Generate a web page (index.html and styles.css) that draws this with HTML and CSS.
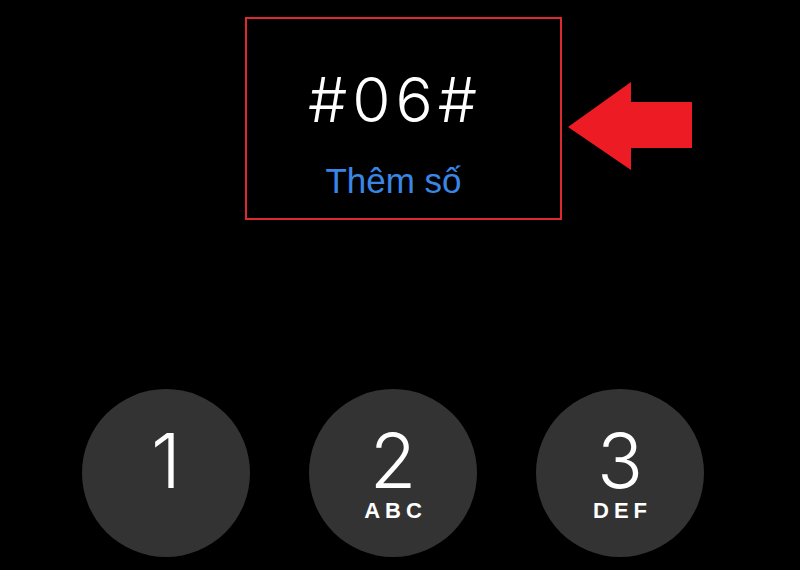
FILE: index.html
```html
<!DOCTYPE html>
<html lang="vi">
<head>
    <meta charset="UTF-8">
    <meta name="viewport" content="width=device-width, initial-scale=1.0">
    <title>Bàn phím</title>
    <link rel="stylesheet" href="styles.css">
</head>
<body>
    <div class="top-row">
        <div class="number-box">
            <div class="dialed">#06#</div>
            <div class="add-number">Thêm số</div>
        </div>
        <svg class="arrow" width="124" height="88" viewBox="0 0 124 88">
            <polygon points="0,45 63,0 63,20 124,20 124,66 63,66 63,88" fill="#ed1c24"/>
        </svg>
    </div>

    <div class="keypad">
        <div class="key">
            <span class="digit">1</span>
        </div>
        <div class="key">
            <span class="digit">2</span>
            <span class="letters">ABC</span>
        </div>
        <div class="key">
            <span class="digit">3</span>
            <span class="letters">DEF</span>
        </div>
    </div>
</body>
</html>
```

FILE: styles.css
```css
body {
    margin: 0;
    padding: 0;
    background-color: #000;
    font-family: 'Liberation Sans', Arial, sans-serif;
    color: #fff;
    overflow: hidden;
    height: 570px;
}

.top-row {
    display: flex;
    align-items: flex-start;
    padding-top: 17px;
    padding-left: 245px;
}

.number-box {
    width: 317px;
    height: 203px;
    box-sizing: border-box;
    border: 2px solid #dc2a30;
    padding-top: 50px;
    padding-right: 22px;
    display: flex;
    flex-direction: column;
    align-items: center;
}

.dialed {
    font-family: Inter, 'Liberation Sans', sans-serif;
    font-weight: 350;
    font-size: 62px;
    line-height: 1;
    letter-spacing: 5px;
    margin-right: -5px;
}

.add-number {
    margin-top: 32px;
    margin-left: 2px;
    font-size: 35px;
    line-height: 1;
    color: #3a86e6;
}

.arrow {
    margin-left: 6px;
    margin-top: 65px;
}

.keypad {
    display: flex;
    gap: 59px;
    padding-left: 82px;
    margin-top: 169px;
}

.key {
    width: 168px;
    height: 168px;
    border-radius: 50%;
    background-color: #333;
    display: flex;
    flex-direction: column;
    align-items: center;
    padding-top: 33px;
    box-sizing: border-box;
}

.digit {
    font-family: Inter, 'Liberation Sans', sans-serif;
    font-weight: 350;
    font-size: 76px;
    line-height: 1;
}

.letters {
    margin-top: 2px;
    font-size: 22px;
    font-weight: bold;
    line-height: 1;
    letter-spacing: 5px;
    margin-right: -5px;
}
```
